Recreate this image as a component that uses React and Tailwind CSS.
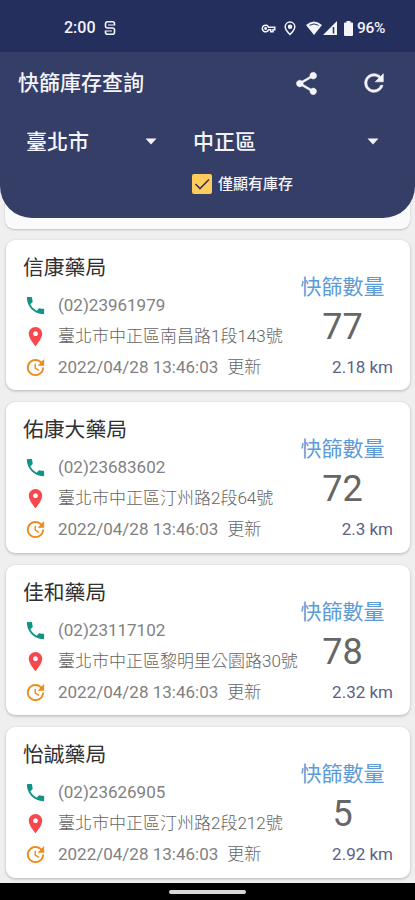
import React from "react";

const stores = [
  { name: "信康藥局", phone: "(02)23961979", address: "臺北市中正區南昌路1段143號", count: 77, distance: "2.18 km" },
  { name: "佑康大藥局", phone: "(02)23683602", address: "臺北市中正區汀州路2段64號", count: 72, distance: "2.3 km" },
  { name: "佳和藥局", phone: "(02)23117102", address: "臺北市中正區黎明里公園路30號", count: 78, distance: "2.32 km" },
  { name: "怡誠藥局", phone: "(02)23626905", address: "臺北市中正區汀州路2段212號", count: 5, distance: "2.92 km" },
];

function Icon({ d, className }) {
  return (
    <svg viewBox="0 0 24 24" fill="currentColor" className={`shrink-0 ${className}`}>
      <path d={d} />
    </svg>
  );
}

const PHONE = "M6.62 10.79c1.44 2.83 3.76 5.14 6.59 6.59l2.2-2.2c.27-.27.67-.36 1.02-.24 1.12.37 2.33.57 3.57.57.55 0 1 .45 1 1V20c0 .55-.45 1-1 1-9.39 0-17-7.61-17-17 0-.55.45-1 1-1h3.5c.55 0 1 .45 1 1 0 1.25.2 2.45.57 3.57.11.35.03.74-.25 1.02l-2.2 2.2z";
const PLACE = "M12 2C8.13 2 5 5.13 5 9c0 5.25 7 13 7 13s7-7.75 7-13c0-3.87-3.13-7-7-7zm0 9.5c-1.38 0-2.5-1.12-2.5-2.5s1.12-2.5 2.5-2.5 2.5 1.12 2.5 2.5-1.12 2.5-2.5 2.5z";
const UPDATE = "M21 10.12h-6.78l2.74-2.82c-2.73-2.7-7.15-2.8-9.88-.1-2.73 2.71-2.73 7.08 0 9.79s7.15 2.71 9.88 0C18.32 15.65 19 14.08 19 12.1h2c0 1.98-.88 4.55-2.64 6.29-3.51 3.48-9.21 3.48-12.72 0-3.5-3.47-3.53-9.11-.02-12.58s9.14-3.47 12.65 0L21 3v7.12zM12.5 8v4.25l3.5 2.08-.72 1.21L11 13V8h1.5z";
const SHARE = "M18 16.08c-.76 0-1.44.3-1.96.77L8.91 12.7c.05-.23.09-.46.09-.7s-.04-.47-.09-.7l7.05-4.11c.54.5 1.25.81 2.04.81 1.66 0 3-1.34 3-3s-1.34-3-3-3-3 1.34-3 3c0 .24.04.47.09.7L8.04 9.81C7.5 9.31 6.79 9 6 9c-1.66 0-3 1.34-3 3s1.34 3 3 3c.79 0 1.5-.31 2.04-.81l7.12 4.16c-.05.21-.08.43-.08.65 0 1.61 1.31 2.92 2.92 2.92s2.92-1.31 2.92-2.92-1.31-2.92-2.92-2.92z";
const REFRESH = "M17.65 6.35C16.2 4.9 14.21 4 12 4c-4.42 0-7.99 3.58-7.99 8s3.57 8 7.99 8c3.73 0 6.84-2.55 7.73-6h-2.08c-.82 2.33-3.04 4-5.65 4-3.31 0-6-2.69-6-6s2.69-6 6-6c1.66 0 3.14.69 4.22 1.78L13 11h7V4l-2.35 2.35z";

function StatusBar() {
  return (
    <div className="flex h-[52px] shrink-0 items-center bg-[#242f5e] pt-[4px] pl-[64px] pr-[30px] text-[#f4f4fb]">
      <span className="text-[16px] font-medium leading-none">2:00</span>
      <svg viewBox="0 0 12 16" className="ml-[8px] h-[16px] w-[12px]" fill="none" stroke="currentColor" strokeWidth="1.6">
        <path d="M10.500 5.500V3.800a2 2 0 0 0-2-2H3.500a2 2 0 0 0-2 2V6a2 2 0 0 0 2 2h5a2 2 0 0 1 2 2v2.200a2 2 0 0 1-2 2H3.500a2 2 0 0 1-2-2v-1.700" />
        <path d="M4 5h6M2 11h6" strokeWidth="1.200" />
      </svg>
      <svg viewBox="0 0 16 10" className="ml-auto h-[9px] w-[15px]" fill="none" stroke="currentColor" strokeWidth="1.7">
        <path d="M8 3.5A3.6 3.6 0 1 0 8 6.5H10.5V8.5H13V6.5H15V3.5Z" />
        <circle cx="4.8" cy="5" r=".8" fill="currentColor" />
      </svg>
      <svg viewBox="0 0 12 15" className="ml-[8px] h-[15px] w-[12px]" fill="none" stroke="currentColor" strokeWidth="1.5">
        <path d="M6 13.5S1.2 9 1.2 5.8a4.8 4.8 0 0 1 9.6 0C10.800 9 6 13.500 6 13.500Z" />
        <circle cx="6" cy="5.800" r="1.500" fill="currentColor" />
      </svg>
      <svg viewBox="0 0 16 14" className="ml-[10px] h-[14px] w-[16px]" fill="currentColor">
        <path d="M0 4Q8-3 16 4L8 14Z" />
        <path d="M3.500 4.300Q8 1.500 12.500 4.300" fill="none" stroke="#242f5e" strokeWidth="1" />
      </svg>
      <svg viewBox="0 0 14 14" className="ml-[1px] h-[14px] w-[14px]" fill="currentColor">
        <path d="M0 14L14 0V14Z" />
        <path d="M10.500 6V12.500" stroke="#242f5e" strokeWidth="1.500" />
      </svg>
      <svg viewBox="0 0 9 15" className="ml-[7px] h-[15px] w-[9px]" fill="currentColor">
        <path d="M2.500 0h4v1.500H8a1 1 0 0 1 1 1V14a1 1 0 0 1-1 1H1a1 1 0 0 1-1-1V2.500a1 1 0 0 1 1-1h1.500Z" />
      </svg>
      <span className="ml-[4px] w-[28px] whitespace-nowrap pt-[2px] text-[15.500px] font-medium leading-none tracking-[-0.300px]">96%</span>
    </div>
  );
}

function Caret() {
  return (
    <svg viewBox="0 0 12 7" className="h-[7px] w-[12px]" fill="currentColor">
      <path d="M.5.5h11L6 6.500Z" />
    </svg>
  );
}

function Header() {
  return (
    <header className="h-[166px] shrink-0 rounded-b-[32px] bg-[#343e67] text-[#f4f4fb]">
      <div className="flex h-[62px] items-center pl-[18px] pr-[27px]">
        <h1 className="pt-px text-[21px] font-medium leading-none">快篩庫存查詢</h1>
        <Icon d={SHARE} className="ml-auto h-[27px] w-[27px] stroke-current stroke-[0.4]" />
        <Icon d={REFRESH} className="ml-[40px] h-[28px] w-[28px] stroke-current stroke-[0.5]" />
      </div>
      <div className="flex h-[54px] items-center pt-px text-[21px] font-medium leading-none">
        <span className="ml-[26px] w-[119px] pt-px">臺北市</span>
        <Caret />
        <span className="ml-[36px] w-[174px] pt-px">中正區</span>
        <Caret />
      </div>
      <div className="flex h-[32px] items-center pl-[192px]">
        <span className="flex h-[20px] w-[20px] items-center justify-center rounded-[2px] bg-[#fdcc5d]">
          <svg viewBox="0 0 16 16" className="h-4 w-4" fill="none" stroke="#39345a" strokeWidth="1.600">
            <path d="M1.500 8L6 12.500L15 3.500" />
          </svg>
        </span>
        <span className="ml-[6px] text-[15px] font-medium leading-none">僅顯有庫存</span>
      </div>
    </header>
  );
}

function StoreCard({ store }) {
  return (
    <article className="flex h-[150.400px] shrink-0 rounded-[9px] bg-white pl-[17px] pr-[17px] pt-[13px] shadow-[0_1px_3px_rgba(0,0,0,0.25)]">
      <div className="flex min-w-0 flex-1 flex-col whitespace-nowrap text-[17px] font-normal text-[#818181]">
        <h2 className="mb-[7px] text-[20.800px] leading-[30px] font-normal text-[#303030]">{store.name}</h2>
        <div className="flex h-[31px] items-center">
          <Icon d={PHONE} className="ml-[1px] mr-[11px] h-[23px] w-[23px] text-[#109485]" />
          <span>{store.phone}</span>
        </div>
        <div className="flex h-[31px] items-center">
          <Icon d={PLACE} className="ml-[1px] mr-[11px] h-[23px] w-[23px] text-[#f8484d]" />
          <span className="font-light text-[#646464]">{store.address}</span>
        </div>
        <div className="flex h-[31px] items-center">
          <Icon d={UPDATE} className="ml-[1px] mr-[11px] h-[23px] w-[23px] text-[#ed8b1d]" />
          <span>2022/04/28 13:46:03</span>
          <span className="ml-[9px] font-light text-[#646464]">更新</span>
        </div>
      </div>
      <div className="flex w-[101px] shrink-0 flex-col items-center pt-[19px]">
        <span className="text-[21px] leading-[30px] text-[#5c9bd6]">快篩數量</span>
        <span className="text-[36px] font-normal leading-[50px] text-[#666]">{store.count}</span>
        <span className="self-end text-[17px] font-normal leading-[31px] text-[#5c6189]">{store.distance}</span>
      </div>
    </article>
  );
}

export default function App() {
  return (
    <div className="flex h-[900px] w-[415px] flex-col overflow-hidden bg-[#efefef] font-[Roboto,'Noto_Sans_CJK_TC',sans-serif]">
      <div>
        <StatusBar />
        <div className="grid">
          <div className="col-start-1 row-start-1 mx-[5px] h-[177px] rounded-b-[9px] bg-[#fafafa] shadow-[0_1px_2px_rgba(0,0,0,0.2)]" />
          <div className="z-10 col-start-1 row-start-1">
            <Header />
          </div>
        </div>
      </div>
      <main className="flex min-h-0 flex-1 flex-col gap-[12px] overflow-hidden pl-[6px] pr-[5px] pt-[11px]">
        {stores.map((store) => (
          <StoreCard key={store.name} store={store} />
        ))}
      </main>
      <footer className="flex h-[17px] shrink-0 items-center justify-center bg-black pt-px">
        <div className="h-[4px] w-[77px] rounded-full bg-[#d8d8d8]" />
      </footer>
    </div>
  );
}
